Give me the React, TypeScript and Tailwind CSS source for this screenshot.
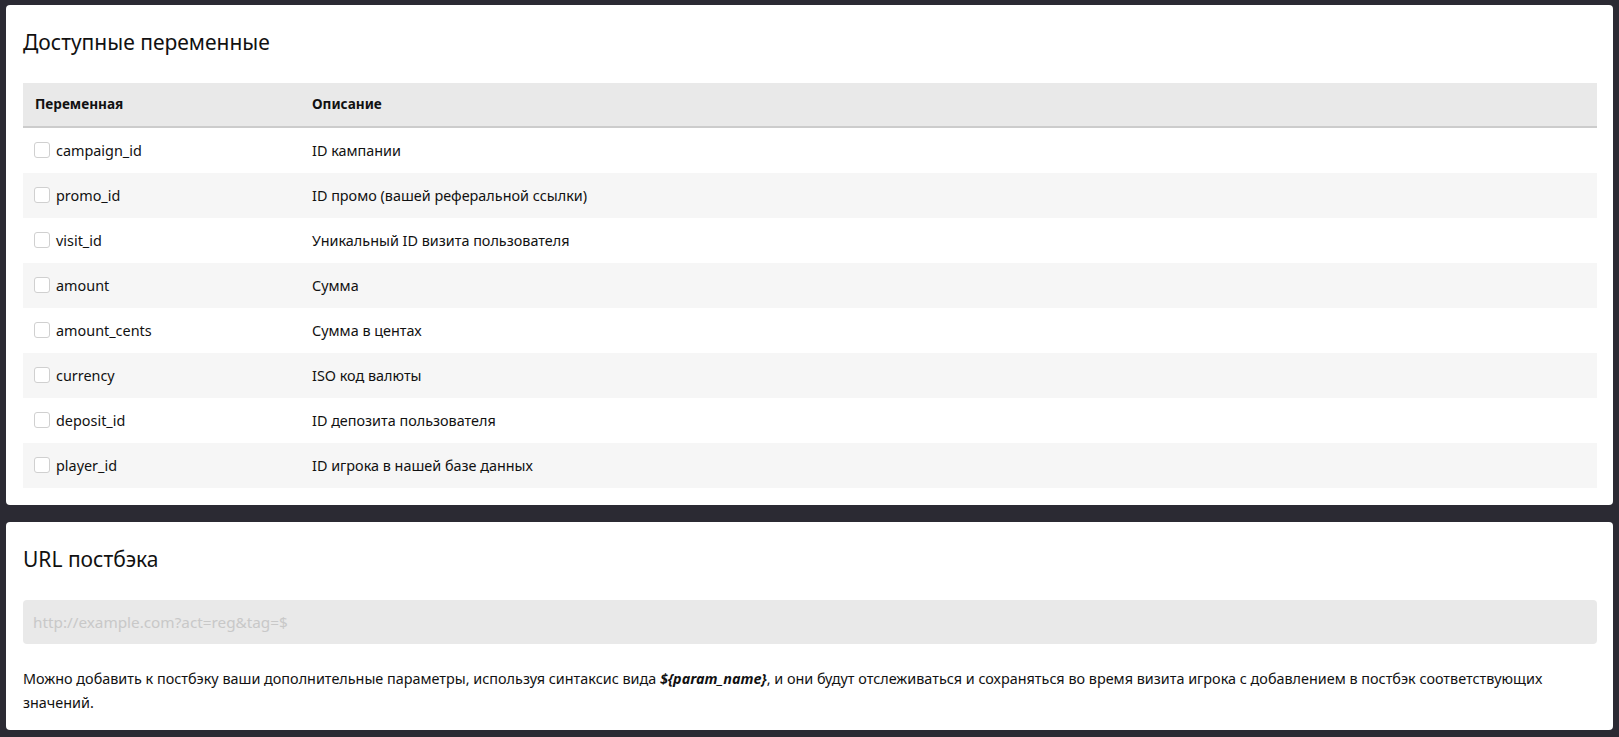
import React from "react";

const rows: [string, string][] = [
  ["campaign_id", "ID кампании"],
  ["promo_id", "ID промо (вашей реферальной ссылки)"],
  ["visit_id", "Уникальный ID визита пользователя"],
  ["amount", "Сумма"],
  ["amount_cents", "Сумма в центах"],
  ["currency", "ISO код валюты"],
  ["deposit_id", "ID депозита пользователя"],
  ["player_id", "ID игрока в нашей базе данных"],
];

export default function App() {
  return (
    <div
      className="min-h-[737px] bg-[#2b2a33] px-[6px] pt-[5px] pb-[8px] text-[#111]"
      style={{ fontFamily: '"Noto Sans", "Open Sans", sans-serif' }}
    >
      <div className="rounded-[4px] bg-white px-[17px] pr-[16px] pt-[22px] pb-[17px]">
        <h2 className="text-[21px] leading-[30px] font-normal mb-[26px]">Доступные переменные</h2>
        <div className="w-full">
          <div className="flex h-[43px] items-center bg-[#e9e9e9] border-b-2 border-[#cccccc] text-[13.6px] font-bold box-content">
            <div className="w-[289px] pl-[12px]">Переменная</div>
            <div>Описание</div>
          </div>
          {rows.map(([name, desc], i) => (
            <div
              key={name}
              className={`flex h-[45px] items-center text-[14.4px] ${i % 2 === 1 ? "bg-[#f6f6f6]" : "bg-white"}`}
            >
              <div className="w-[289px] pl-[11px] flex items-center">
                <span className="inline-block w-[16px] h-[16px] rounded-[3px] border border-[#d0d0d0] bg-white mr-[6px]" />
                <span>{name}</span>
              </div>
              <div>{desc}</div>
            </div>
          ))}
        </div>
      </div>

      <div className="mt-[17px] rounded-[4px] bg-white px-[17px] pr-[16px] pt-[22px] pb-[15px]">
        <h2 className="text-[21px] leading-[30px] font-normal mb-[26px]">URL постбэка</h2>
        <div className="h-[44px] rounded-[4px] bg-[#e9e9e9] flex items-center px-[10px] text-[15.3px] text-[#c8c8c8]">
          http://example.com?act=reg&amp;tag=$
        </div>
        <p className="mt-[23px] text-[14.4px] leading-[24px]">
          Можно добавить к постбэку ваши дополнительные параметры, используя синтаксис вида{" "}
          <span className="font-bold italic">{"${param_name}"}</span>, и они будут отслеживаться и сохраняться во время
          визита игрока с добавлением в постбэк соответствующих значений.
        </p>
      </div>
    </div>
  );
}
